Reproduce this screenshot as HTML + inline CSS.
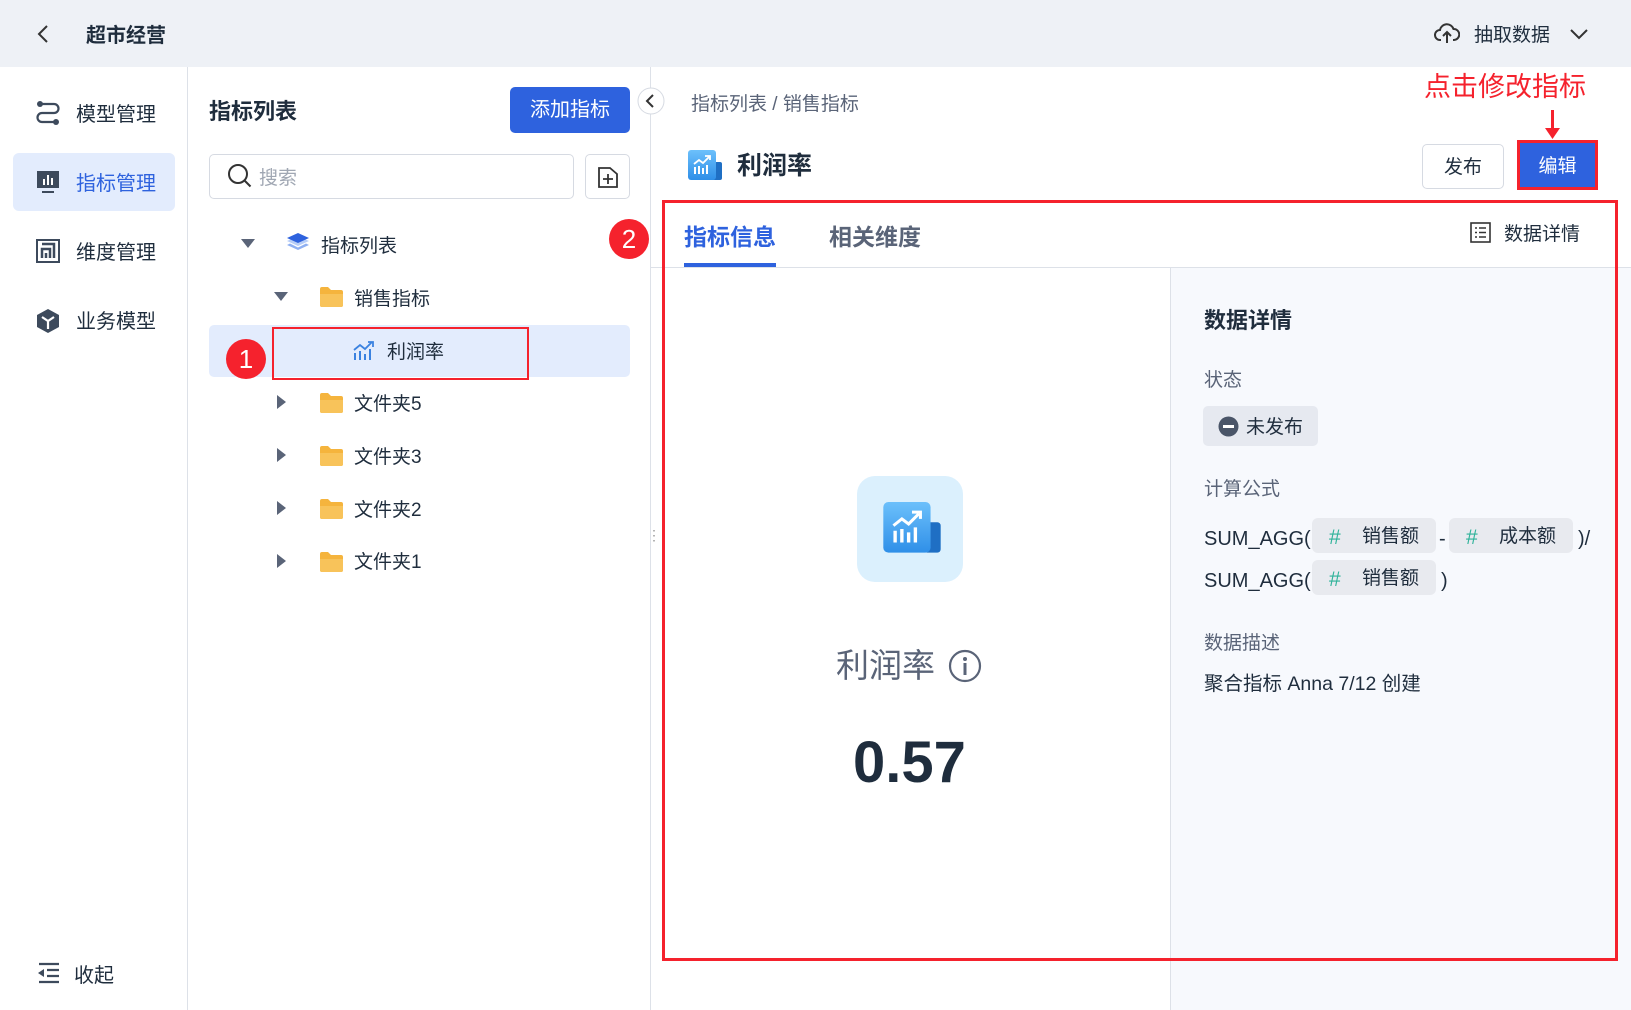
<!DOCTYPE html>
<html><head><meta charset="utf-8">
<style>
*{box-sizing:border-box;margin:0;padding:0}
body{width:1631px;height:1010px;overflow:hidden;background:#fff;font-family:"Liberation Sans","Noto Sans CJK SC",sans-serif;color:#1f2d3d;position:relative}
.a{position:absolute}
.t{position:absolute;white-space:nowrap;line-height:1;transform:translateY(2px)}
</style></head><body>
<!-- header -->
<div class="a" style="left:0;top:0;width:1631px;height:67px;background:#eef1f6"></div>
<svg class="a" style="left:36px;top:24px" width="16" height="20" viewBox="0 0 16 20"><path d="M11 2L3 10l8 8" fill="none" stroke="#333" stroke-width="2"/></svg>
<div class="t" style="left:86px;top:24px;font-size:20px;font-weight:bold;color:#1f2d3d">超市经营</div>
<svg class="a" style="left:1434px;top:22px" width="26" height="24" viewBox="0 0 26 24"><path d="M7 18H6a5 5 0 0 1 0-10 7 7 0 0 1 13.5-1A5.5 5.5 0 0 1 20 18h-1" fill="none" stroke="#333" stroke-width="2"/><path d="M13 21V11M9 14l4-4 4 4" fill="none" stroke="#333" stroke-width="2"/></svg>
<div class="t" style="left:1474px;top:24px;font-size:19px;color:#1f2d3d">抽取数据</div>
<svg class="a" style="left:1569px;top:27px" width="20" height="14" viewBox="0 0 20 14"><path d="M2 3l8 8 8-8" fill="none" stroke="#333" stroke-width="2"/></svg>

<!-- sidebar -->
<div class="a" style="left:187px;top:67px;width:1px;height:943px;background:#dde1e8"></div>
<svg class="a" style="left:36px;top:100px" width="24" height="26" viewBox="0 0 24 26"><circle cx="4" cy="4" r="3" fill="#3d4a5c"/><circle cx="20" cy="22" r="3" fill="#3d4a5c"/><path d="M4 4h14a4 4 0 0 1 0 9H6a4 4 0 0 0 0 9h14" fill="none" stroke="#3d4a5c" stroke-width="2.2"/></svg>
<div class="t" style="left:76px;top:103px;font-size:20px;color:#1f2d3d">模型管理</div>
<div class="a" style="left:13px;top:153px;width:162px;height:58px;background:#e3ecfd;border-radius:6px"></div>
<svg class="a" style="left:36px;top:170px" width="24" height="24" viewBox="0 0 24 24"><rect x="1" y="1" width="22" height="17" fill="#3d4a5c"/><rect x="7" y="9" width="2" height="6" fill="#fff"/><rect x="11" y="5" width="2" height="10" fill="#fff"/><rect x="15" y="8" width="2" height="7" fill="#fff"/><rect x="6" y="21" width="12" height="2" fill="#3d4a5c"/></svg>
<div class="t" style="left:76px;top:172px;font-size:20px;color:#2e62de">指标管理</div>
<svg class="a" style="left:36px;top:239px" width="24" height="24" viewBox="0 0 24 24"><path d="M1 1h22v22H1z" fill="none" stroke="#3d4a5c" stroke-width="2"/><path d="M6 19V10h8v9M10 19v-5h-0M18 19V5H6" fill="none" stroke="#3d4a5c" stroke-width="2.5"/></svg>
<div class="t" style="left:76px;top:241px;font-size:20px;color:#1f2d3d">维度管理</div>
<svg class="a" style="left:36px;top:308px" width="24" height="26" viewBox="0 0 24 26"><path d="M12 1l11 6v12l-11 6-11-6V7z" fill="#3d4a5c"/><path d="M6 9l6 4 6-4M12 13v8" fill="none" stroke="#fff" stroke-width="2.2"/></svg>
<div class="t" style="left:76px;top:310px;font-size:20px;color:#1f2d3d">业务模型</div>
<svg class="a" style="left:37px;top:962px" width="22" height="22" viewBox="0 0 22 22"><path d="M2 2h20M10 8h12M10 14h12M2 20h20" stroke="#3d4a5c" stroke-width="2.2"/><path d="M1 11l6-4v8z" fill="#3d4a5c"/></svg>
<div class="t" style="left:74px;top:964px;font-size:20px;color:#1f2d3d">收起</div>

<!-- middle panel -->
<div class="a" style="left:650px;top:67px;width:1px;height:943px;background:#dde1e8"></div>
<div class="t" style="left:209px;top:99px;font-size:22px;font-weight:bold;color:#1f2d3d">指标列表</div>
<div class="a" style="left:510px;top:87px;width:120px;height:46px;background:#2e62de;border-radius:5px;color:#fff;font-size:20px;text-align:center;line-height:46px">添加指标</div>
<div class="a" style="left:209px;top:154px;width:365px;height:45px;border:1px solid #d6dae2;border-radius:5px"></div>
<svg class="a" style="left:227px;top:163px" width="26" height="26" viewBox="0 0 26 26"><circle cx="11" cy="11" r="9" fill="none" stroke="#333" stroke-width="2"/><path d="M17.5 17.5l6 6" stroke="#333" stroke-width="2"/></svg>
<div class="t" style="left:259px;top:167px;font-size:19px;color:#a0a7b3">搜索</div>
<div class="a" style="left:585px;top:154px;width:45px;height:45px;border:1px solid #d6dae2;border-radius:5px"></div>
<svg class="a" style="left:597px;top:166px" width="22" height="22" viewBox="0 0 22 22"><path d="M2 2h11l7 6v13H2z" fill="none" stroke="#333" stroke-width="1.8"/><path d="M11 8v10M6 13h10" stroke="#333" stroke-width="1.8"/></svg>
<svg class="a" style="left:637px;top:87px" width="28" height="28" viewBox="0 0 28 28"><circle cx="14" cy="14" r="13" fill="#fff" stroke="#d6dae2"/><path d="M16 8l-6 6 6 6" fill="none" stroke="#333" stroke-width="2"/></svg>

<!-- tree -->
<svg class="a" style="left:241px;top:239px" width="14" height="10"><path d="M0 0h14L7 9z" fill="#5a6478"/></svg>
<svg class="a" style="left:286px;top:232px" width="24" height="24" viewBox="0 0 24 24"><path d="M12 14L1 9l11-5 11 5z" fill="#b7cdf7"/><path d="M12 18L1 13l3-1.5 8 4 8-4 3 1.5z" fill="#8fb0f2"/><path d="M12 11L1 6l11-5 11 5z" fill="#2e62de"/></svg>
<div class="t" style="left:321px;top:235px;font-size:19px;color:#1f2d3d">指标列表</div>
<svg class="a" style="left:274px;top:292px" width="14" height="10"><path d="M0 0h14L7 9z" fill="#5a6478"/></svg>
<svg class="a" style="left:320px;top:286px" width="23" height="21" viewBox="0 0 23 21"><path d="M0 3a2 2 0 0 1 2-2h6l3 3h10a2 2 0 0 1 2 2v13a2 2 0 0 1-2 2H2a2 2 0 0 1-2-2z" fill="#f5b43d"/><path d="M0 8h23v11a2 2 0 0 1-2 2H2a2 2 0 0 1-2-2z" fill="#f8c35a"/></svg>
<div class="t" style="left:354px;top:288px;font-size:19px;color:#1f2d3d">销售指标</div>
<div class="a" style="left:209px;top:325px;width:421px;height:52px;background:#e3ecfd;border-radius:5px"></div>
<div class="a" style="left:272px;top:327px;width:257px;height:53px;border:2px solid #f5222d"></div>
<svg class="a" style="left:353px;top:340px" width="22" height="22" viewBox="0 0 22 22"><path d="M2 20v-7M7 20v-9M12 20v-6M17 20V9" stroke="#3b82e0" stroke-width="2"/><path d="M1 10l6-5 5 4 7-7M15 2h5v5" fill="none" stroke="#3b82e0" stroke-width="1.8"/></svg>
<div class="t" style="left:387px;top:341px;font-size:19px;color:#1f2d3d">利润率</div>
<svg class="a" style="left:226px;top:339px" width="42" height="42"><circle cx="20" cy="20" r="20" fill="#f5222d"/><text x="20" y="29" text-anchor="middle" font-family="Liberation Sans" font-size="26" fill="#fff">1</text></svg>

<svg class="a" style="left:277px;top:395px" width="10" height="15"><path d="M0 0v14l9-7z" fill="#5a6478"/></svg>
<svg class="a" style="left:320px;top:392px" width="23" height="21" viewBox="0 0 23 21"><path d="M0 3a2 2 0 0 1 2-2h6l3 3h10a2 2 0 0 1 2 2v13a2 2 0 0 1-2 2H2a2 2 0 0 1-2-2z" fill="#f5b43d"/><path d="M0 8h23v11a2 2 0 0 1-2 2H2a2 2 0 0 1-2-2z" fill="#f8c35a"/></svg>
<div class="t" style="left:354px;top:393px;font-size:19px;color:#1f2d3d">文件夹5</div>
<svg class="a" style="left:277px;top:448px" width="10" height="15"><path d="M0 0v14l9-7z" fill="#5a6478"/></svg>
<svg class="a" style="left:320px;top:445px" width="23" height="21" viewBox="0 0 23 21"><path d="M0 3a2 2 0 0 1 2-2h6l3 3h10a2 2 0 0 1 2 2v13a2 2 0 0 1-2 2H2a2 2 0 0 1-2-2z" fill="#f5b43d"/><path d="M0 8h23v11a2 2 0 0 1-2 2H2a2 2 0 0 1-2-2z" fill="#f8c35a"/></svg>
<div class="t" style="left:354px;top:446px;font-size:19px;color:#1f2d3d">文件夹3</div>
<svg class="a" style="left:277px;top:501px" width="10" height="15"><path d="M0 0v14l9-7z" fill="#5a6478"/></svg>
<svg class="a" style="left:320px;top:498px" width="23" height="21" viewBox="0 0 23 21"><path d="M0 3a2 2 0 0 1 2-2h6l3 3h10a2 2 0 0 1 2 2v13a2 2 0 0 1-2 2H2a2 2 0 0 1-2-2z" fill="#f5b43d"/><path d="M0 8h23v11a2 2 0 0 1-2 2H2a2 2 0 0 1-2-2z" fill="#f8c35a"/></svg>
<div class="t" style="left:354px;top:499px;font-size:19px;color:#1f2d3d">文件夹2</div>
<svg class="a" style="left:277px;top:554px" width="10" height="15"><path d="M0 0v14l9-7z" fill="#5a6478"/></svg>
<svg class="a" style="left:320px;top:551px" width="23" height="21" viewBox="0 0 23 21"><path d="M0 3a2 2 0 0 1 2-2h6l3 3h10a2 2 0 0 1 2 2v13a2 2 0 0 1-2 2H2a2 2 0 0 1-2-2z" fill="#f5b43d"/><path d="M0 8h23v11a2 2 0 0 1-2 2H2a2 2 0 0 1-2-2z" fill="#f8c35a"/></svg>
<div class="t" style="left:354px;top:551px;font-size:19px;color:#1f2d3d">文件夹1</div>
<div class="t" style="left:647px;top:526px;font-size:14px;color:#999">⋮</div>

<!-- right content -->
<div class="t" style="left:691px;top:93px;font-size:19px;color:#5a6478">指标列表 / 销售指标</div>
<div class="t" style="left:1424px;top:72px;font-size:27px;color:#f5222d">点击修改指标</div>
<div class="a" style="left:1551px;top:110px;width:3px;height:22px;background:#f5222d"></div>
<svg class="a" style="left:1545px;top:128px" width="15" height="12"><path d="M0 0h15L7.5 11z" fill="#f5222d"/></svg>
<svg class="a" style="left:688px;top:150px" width="34" height="32" viewBox="0 0 34 32"><defs><linearGradient id="g" x1="0" y1="0" x2="0" y2="1"><stop offset="0" stop-color="#6cc0fb"/><stop offset="1" stop-color="#2f8fe8"/></linearGradient></defs><rect x="24" y="12" width="10" height="18" rx="2" fill="#1f6fc4"/><rect x="0" y="0" width="28" height="30" rx="3" fill="url(#g)"/><path d="M7 24v-7M11 24v-8M15 24v-6M19 24v-9" stroke="#fff" stroke-width="2"/><path d="M6 14l5-4 4 3 6-6M17 6h5v4" fill="none" stroke="#fff" stroke-width="1.8"/></svg>
<div class="t" style="left:737px;top:152px;font-size:25px;font-weight:bold;color:#1f2d3d">利润率</div>
<div class="a" style="left:1422px;top:144px;width:82px;height:45px;border:1px solid #d6dae2;border-radius:5px;text-align:center;line-height:45px;font-size:19px;color:#1f2d3d">发布</div>
<div class="a" style="left:1517px;top:140px;width:81px;height:50px;border:3px solid #f5222d;background:#2e62de;text-align:center;line-height:47px;font-size:19px;color:#fff">编辑</div>

<!-- tabs & content -->
<div class="a" style="left:651px;top:267px;width:980px;height:1px;background:#dde1e8"></div>
<div class="a" style="left:1170px;top:268px;width:461px;height:742px;background:#f7f9fd;border-left:1px solid #dde1e8"></div>
<div class="t" style="left:684px;top:224px;font-size:23px;font-weight:bold;color:#2e62de">指标信息</div>
<div class="a" style="left:684px;top:263px;width:92px;height:4px;background:#2e62de"></div>
<div class="t" style="left:829px;top:224px;font-size:23px;font-weight:bold;color:#5a6478">相关维度</div>
<svg class="a" style="left:1470px;top:222px" width="21" height="21" viewBox="0 0 21 21"><rect x="1" y="1" width="19" height="19" fill="none" stroke="#333" stroke-width="1.6"/><path d="M5 6h2M9 6h7M5 10.5h2M9 10.5h7M5 15h2M9 15h7" stroke="#333" stroke-width="1.6"/></svg>
<div class="t" style="left:1504px;top:223px;font-size:19px;color:#1f2d3d">数据详情</div>
<svg class="a" style="left:608px;top:218px" width="42" height="42"><circle cx="21" cy="21" r="20" fill="#f5222d"/><text x="21" y="30" text-anchor="middle" font-family="Liberation Sans" font-size="26" fill="#fff">2</text></svg>

<div class="a" style="left:857px;top:476px;width:106px;height:106px;background:#dbf0fd;border-radius:18px"></div>
<svg class="a" style="left:883px;top:502px" width="58" height="54" viewBox="0 0 34 32"><defs><linearGradient id="g2" x1="0" y1="0" x2="0" y2="1"><stop offset="0" stop-color="#6cc0fb"/><stop offset="1" stop-color="#2f8fe8"/></linearGradient></defs><rect x="24" y="12" width="10" height="18" rx="2" fill="#1f6fc4"/><rect x="0" y="0" width="28" height="30" rx="3" fill="url(#g2)"/><path d="M7 24v-7M11 24v-8M15 24v-6M19 24v-9" stroke="#fff" stroke-width="2"/><path d="M6 14l5-4 4 3 6-6M17 6h5v4" fill="none" stroke="#fff" stroke-width="1.8"/></svg>
<div class="t" style="left:836px;top:647px;font-size:33px;color:#5a6478">利润率</div>
<svg class="a" style="left:948px;top:649px" width="34" height="34" viewBox="0 0 34 34"><circle cx="17" cy="17" r="15" fill="none" stroke="#5a6478" stroke-width="2.2"/><circle cx="17" cy="10" r="2" fill="#5a6478"/><path d="M17 14v12" stroke="#5a6478" stroke-width="3"/></svg>
<div class="t" style="left:853px;top:732px;font-size:58px;font-weight:bold;color:#1f2d3d">0.57</div>

<div class="t" style="left:1204px;top:308px;font-size:22px;font-weight:bold;color:#1f2d3d">数据详情</div>
<div class="t" style="left:1204px;top:369px;font-size:19px;color:#5a6478">状态</div>
<div class="a" style="left:1203px;top:406px;width:115px;height:40px;background:#e6e9f0;border-radius:5px"></div>
<svg class="a" style="left:1218px;top:416px" width="21" height="21"><circle cx="10.5" cy="10.5" r="10" fill="#4a5568"/><rect x="5" y="9" width="11" height="3" fill="#fff"/></svg>
<div class="t" style="left:1246px;top:416px;font-size:19px;color:#1f2d3d">未发布</div>
<div class="t" style="left:1204px;top:478px;font-size:19px;color:#5a6478">计算公式</div>
<div class="t" style="left:1204px;top:527px;font-size:20px;color:#1f2d3d">SUM_AGG(</div>
<div class="a" style="left:1312px;top:518px;width:124px;height:35px;background:#e8eaef;border-radius:6px"></div>
<div class="t" style="left:1329px;top:525px;font-size:21px;color:#2fb39a">#</div>
<div class="t" style="left:1362px;top:525px;font-size:19px;color:#1f2d3d">销售额</div>
<div class="t" style="left:1439px;top:527px;font-size:20px;color:#1f2d3d">-</div>
<div class="a" style="left:1449px;top:518px;width:124px;height:35px;background:#e8eaef;border-radius:6px"></div>
<div class="t" style="left:1466px;top:525px;font-size:21px;color:#2fb39a">#</div>
<div class="t" style="left:1499px;top:525px;font-size:19px;color:#1f2d3d">成本额</div>
<div class="t" style="left:1578px;top:527px;font-size:20px;color:#1f2d3d">)/</div>
<div class="t" style="left:1204px;top:569px;font-size:20px;color:#1f2d3d">SUM_AGG(</div>
<div class="a" style="left:1312px;top:560px;width:124px;height:35px;background:#e8eaef;border-radius:6px"></div>
<div class="t" style="left:1329px;top:567px;font-size:21px;color:#2fb39a">#</div>
<div class="t" style="left:1362px;top:567px;font-size:19px;color:#1f2d3d">销售额</div>
<div class="t" style="left:1441px;top:569px;font-size:20px;color:#1f2d3d">)</div>
<div class="t" style="left:1204px;top:632px;font-size:19px;color:#5a6478">数据描述</div>
<div class="t" style="left:1204px;top:673px;font-size:19.5px;color:#1f2d3d">聚合指标 Anna 7/12 创建</div>

<!-- red box 2 -->
<div class="a" style="left:662px;top:200px;width:956px;height:761px;border:3px solid #f5222d"></div>
</body></html>
